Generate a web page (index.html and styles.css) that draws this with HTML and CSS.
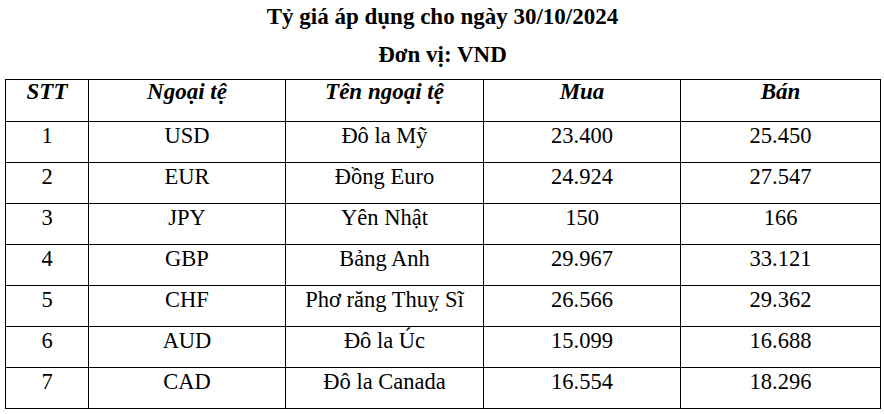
FILE: index.html
```html
<!DOCTYPE html>
<html lang="vi">
<head>
<meta charset="utf-8">
<link rel="stylesheet" href="styles.css">
</head>
<body>
<div class="page">
  <p class="title">Tỷ giá áp dụng cho ngày 30/10/2024</p>
  <p class="unit">Đơn vị: VND</p>
  <table class="rates">
    <colgroup>
      <col class="c1"><col class="c2"><col class="c3"><col class="c4"><col class="c5">
    </colgroup>
    <thead>
      <tr><th>STT</th><th>Ngoại tệ</th><th>Tên ngoại tệ</th><th>Mua</th><th>Bán</th></tr>
    </thead>
    <tbody>
      <tr><td>1</td><td>USD</td><td>Đô la Mỹ</td><td>23.400</td><td>25.450</td></tr>
      <tr><td>2</td><td>EUR</td><td>Đồng Euro</td><td>24.924</td><td>27.547</td></tr>
      <tr><td>3</td><td>JPY</td><td>Yên Nhật</td><td>150</td><td>166</td></tr>
      <tr><td>4</td><td>GBP</td><td>Bảng Anh</td><td>29.967</td><td>33.121</td></tr>
      <tr><td>5</td><td>CHF</td><td>Phơ răng Thuỵ Sĩ</td><td>26.566</td><td>29.362</td></tr>
      <tr><td>6</td><td>AUD</td><td>Đô la Úc</td><td>15.099</td><td>16.688</td></tr>
      <tr><td>7</td><td>CAD</td><td>Đô la Canada</td><td>16.554</td><td>18.296</td></tr>
    </tbody>
  </table>
</div>
</body>
</html>
```
FILE: styles.css
```css
html, body {
  margin: 0;
  padding: 0;
  background: #ffffff;
}
.page {
  padding: 5px 0 0 5px;
  width: 875px;
  font-family: "Liberation Serif", "Times New Roman", serif;
  color: #000000;
}
.title, .unit {
  margin: 0;
  text-align: center;
  font-weight: bold;
  font-size: 23px;
  line-height: 24px;
}
.title { height: 38px; }
.unit { height: 36px; }
.rates {
  border-collapse: collapse;
  width: 875px;
  table-layout: fixed;
  font-family: "Liberation Serif", "Times New Roman", serif;
  font-size: 22.5px;
  line-height: 24px;
}
.c1 { width: 83px; }
.c2 { width: 197px; }
.c3 { width: 198px; }
.c4 { width: 197px; }
.c5 { width: 200px; }
.rates th, .rates td {
  border: 1px solid #000000;
  text-align: center;
  vertical-align: top;
  padding: 0;
}
.rates th {
  font-style: italic;
  font-weight: bold;
  font-size: 23px;
  height: 41px;
}
.rates td {
  font-weight: normal;
  padding-top: 2px;
  height: 38px;
}
```
